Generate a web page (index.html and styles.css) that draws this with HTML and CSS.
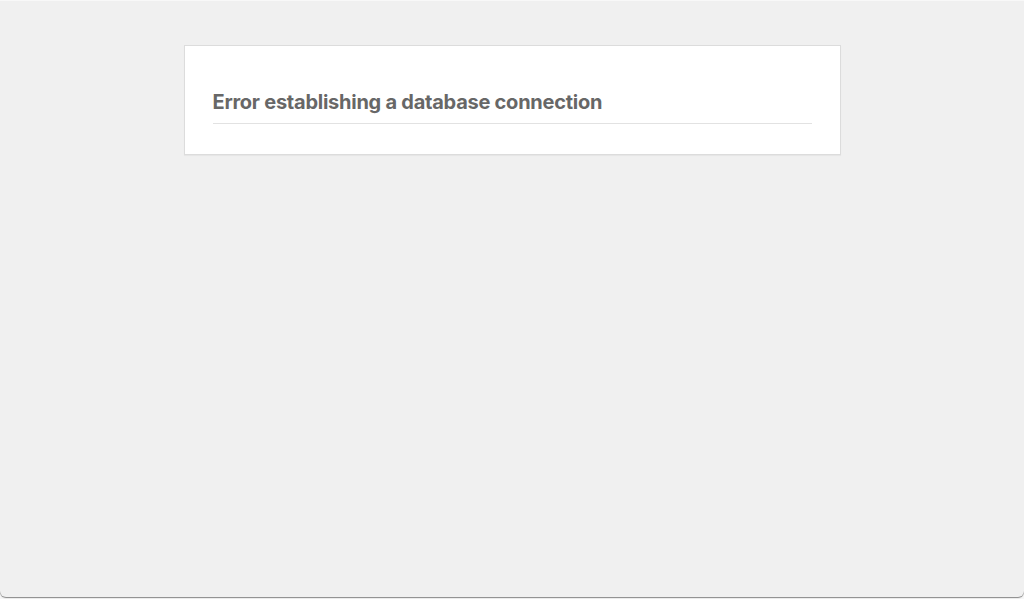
FILE: index.html
```html
<!DOCTYPE html>
<html lang="en">
<head>
<meta charset="utf-8">
<title>Database Error</title>
<link rel="stylesheet" href="styles.css">
</head>
<body>
<div class="window">
  <main class="card">
    <h1 class="title">Error establishing a database connection</h1>
  </main>
</div>
</body>
</html>
```
FILE: styles.css
```css
html, body {
  margin: 0;
  padding: 0;
  height: 100%;
  background: #f6f6f6;
}
.window {
  box-sizing: border-box;
  height: 597px;
  background: #f0f0f0;
  border-top: 1px solid #f8f8f8;
  border-radius: 0 0 6px 6px;
  box-shadow: 0 1px 1px rgba(0, 0, 0, 0.45);
  padding-top: 44px;
  overflow: hidden;
}
.card {
  box-sizing: border-box;
  width: 657px;
  margin: 0 auto;
  background: #fff;
  border: 1px solid #dcdcdc;
  box-shadow: 0 1px 1px rgba(0, 0, 0, 0.04);
  padding: 44px 28px 30px;
}
.title {
  margin: 0;
  font-family: Inter, "Noto Sans", sans-serif;
  font-size: 20px;
  line-height: 24px;
  font-weight: 700;
  letter-spacing: -0.25px;
  color: #676767;
  padding-bottom: 9px;
  border-bottom: 1px solid #e2e2e2;
}
```
